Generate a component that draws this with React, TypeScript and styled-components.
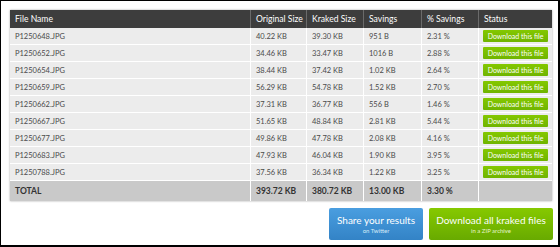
import styled, { createGlobalStyle } from 'styled-components';

const GlobalStyle = createGlobalStyle`
	html, body {
		margin: 0;
		padding: 0;
		background: #FFFFFF;
	}
	* {
		box-sizing: border-box;
	}
`

const Frame = styled.div`
	width: 560px;
	height: 247px;
	border-style: solid;
	border-color: #000;
	border-width: 1px 2px 2px 1px;
	padding: 9px 6px 0 9px;
	font-family: Lato, "Open Sans", sans-serif;
	color: #444;
	display: flex;
	flex-direction: column;
	white-space: nowrap;
`
const Table = styled.table`
	width: 542px;
	border-collapse: separate;
	border-spacing: 0;
	table-layout: fixed;
	box-shadow: 0 0 2px rgba(0, 0, 0, 0.35);
`
const HeadCell = styled.th<{ w: number }>`
	width: ${({ w }) => w}px;
	height: 18px;
	padding: 0 0 0 5px;
	background: #3d3d3d;
	color: #FEFEFE;
	font-size: 8.6px;
	font-weight: 400;
	text-align: left;
	overflow: hidden;
	border-left: 1px solid #6a6a6a;
	&:first-child {
		border-left: none;
	}
`
const Cell = styled.td<{ total?: boolean }>`
	height: ${({ total }) => total ? '20px' : '17px'};
	padding: 0 0 0 5px;
	background: ${({ total }) => total ? '#c9c9c9' : '#ececec'};
	font-size: ${({ total }) => total ? '8.5px' : '7.5px'};
	font-weight: ${({ total }) => total ? 700 : 400};
	color: ${({ total }) => total ? '#333' : '#4a4a4a'};
	overflow: hidden;
	border-left: 1px solid #FFFFFF;
	border-bottom: ${({ total }) => total ? 'none' : '1px solid #FFFFFF'};
	&:first-child {
		border-left: none;
	}
`
const StatusCell = styled(Cell)`
	padding: 0 0 0 4px;
`
const FileButton = styled.button`
	display: block;
	width: 65px;
	height: 12px;
	padding: 0;
	border: none;
	border-radius: 1px;
	background: linear-gradient(#84c800, #6fb400);
	color: #FEFEFE;
	font-family: Lato, "Open Sans", sans-serif;
	font-size: 7px;
	line-height: 12px;
	white-space: nowrap;
	cursor: pointer;
`
const Actions = styled.div`
	display: flex;
	justify-content: flex-end;
	gap: 6px;
	margin-top: 7px;
	margin-right: -1px;
`
const BigButton = styled.button<{ tone: 'blue' | 'green' }>`
	display: flex;
	flex-direction: column;
	align-items: center;
	justify-content: center;
	height: 32px;
	padding: 0;
	border: none;
	border-radius: 2px;
	background: ${({ tone }) => tone === 'blue'
		? 'linear-gradient(#4a9ee0, #3383c6)'
		: 'linear-gradient(#86c900, #68aa00)'};
	color: #FEFEFE;
	font-family: Lato, "Open Sans", sans-serif;
	white-space: nowrap;
	cursor: pointer;
`
const BigTitle = styled.span`
	font-size: 10px;
	line-height: 13px;
`
const BigSub = styled.span<{ tone: 'blue' | 'green' }>`
	font-size: 6px;
	line-height: 8px;
	color: ${({ tone }) => tone === 'blue' ? '#d6eaf8' : '#e6f4cc'};
`

type TRow = [string, string, string, string, string];

const rows: TRow[] = [
	['P1250648.JPG', '40.22 KB', '39.30 KB', '951 B', '2.31 %'],
	['P1250652.JPG', '34.46 KB', '33.47 KB', '1016 B', '2.88 %'],
	['P1250654.JPG', '38.44 KB', '37.42 KB', '1.02 KB', '2.64 %'],
	['P1250659.JPG', '56.29 KB', '54.78 KB', '1.52 KB', '2.70 %'],
	['P1250662.JPG', '37.31 KB', '36.77 KB', '556 B', '1.46 %'],
	['P1250667.JPG', '51.65 KB', '48.84 KB', '2.81 KB', '5.44 %'],
	['P1250677.JPG', '49.86 KB', '47.78 KB', '2.08 KB', '4.16 %'],
	['P1250683.JPG', '47.93 KB', '46.04 KB', '1.90 KB', '3.95 %'],
	['P1250788.JPG', '37.56 KB', '36.34 KB', '1.22 KB', '3.25 %'],
];

const columns: [string, number][] = [
	['File Name', 240],
	['Original Size', 56],
	['Kraked Size', 57],
	['Savings', 58],
	['% Savings', 57],
	['Status', 74],
];

const App = () => {
	return (
		<>
			<GlobalStyle />
			<Frame>
				<Table>
					<thead>
						<tr>
							{columns.map(([name, w]) => <HeadCell key={name} w={w}>{name}</HeadCell>)}
						</tr>
					</thead>
					<tbody>
						{rows.map((row) => (
							<tr key={row[0]}>
								{row.map((value, i) => <Cell key={i}>{value}</Cell>)}
								<StatusCell><FileButton>Download this file</FileButton></StatusCell>
							</tr>
						))}
						<tr>
							<Cell total>TOTAL</Cell>
							<Cell total>393.72 KB</Cell>
							<Cell total>380.72 KB</Cell>
							<Cell total>13.00 KB</Cell>
							<Cell total>3.30 %</Cell>
							<Cell total></Cell>
						</tr>
					</tbody>
				</Table>
				<Actions>
					<BigButton tone="blue" style={{ width: 94 }}>
						<BigTitle>Share your results</BigTitle>
						<BigSub tone="blue">on Twitter</BigSub>
					</BigButton>
					<BigButton tone="green" style={{ width: 124 }}>
						<BigTitle>Download all kraked files</BigTitle>
						<BigSub tone="green">in a ZIP archive</BigSub>
					</BigButton>
				</Actions>
			</Frame>
		</>
	);
}

export default App;
